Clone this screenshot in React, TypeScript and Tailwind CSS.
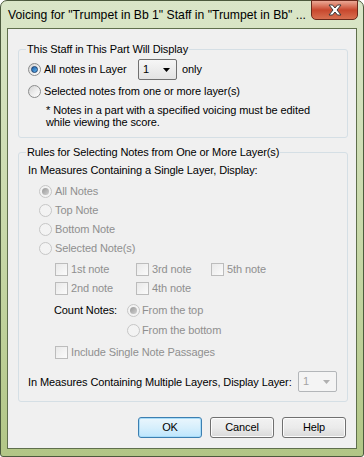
import React from "react";

const Radio = ({ checked, disabled }: { checked?: boolean; disabled?: boolean }) => (
  <span
    className={`flex h-[13px] w-[13px] shrink-0 items-center justify-center rounded-full border ${
      disabled
        ? "border-[#c6c6c6] bg-[#f3f3f3]"
        : "border-[#8b8c8c] bg-gradient-to-br from-[#d2d2d2] via-[#ececec] to-[#ffffff]"
    }`}
  >
    {checked && (
      <span
        className={`h-[7px] w-[7px] rounded-full ${
          disabled
            ? "bg-gradient-to-br from-[#9a9a9a] to-[#d0d0d0]"
            : "border border-[#1b3f6e] bg-gradient-to-br from-[#1d5fa8] to-[#62b6ef]"
        }`}
      />
    )}
  </span>
);

const Check = () => (
  <span className="h-[13px] w-[13px] shrink-0 border border-[#bcbcbc] bg-gradient-to-br from-[#e9e9e9] to-[#fbfbfb]" />
);

const Arrow = ({ color }: { color: string }) => (
  <svg width="7" height="4" viewBox="0 0 7 4">
    <path d="M0 0h7L3.5 4z" fill={color} />
  </svg>
);

const Combo = ({ disabled }: { disabled?: boolean }) => (
  <div
    className={`flex h-[21px] w-[39px] shrink-0 items-center justify-between rounded-[2px] border pl-[4px] pr-[6px] ${
      disabled
        ? "border-[#b3b6b9] bg-[#f4f4f4] text-[#a3a3a3]"
        : "border-[#707070] bg-gradient-to-b from-[#f6f6f6] to-[#e3e3e3] text-black"
    }`}
  >
    <span>1</span>
    <Arrow color={disabled ? "#b0b0b0" : "#000000"} />
  </div>
);

const Btn = ({ label, primary }: { label: string; primary?: boolean }) => (
  <button
    className={`h-[21px] w-[64px] rounded-[3px] border text-black ${
      primary
        ? "border-[#3c7fb1] bg-gradient-to-b from-[#eaf6fd] via-[#d7effc] to-[#bde6fd] shadow-[inset_0_0_0_1px_#a8dcf8]"
        : "border-[#707070] bg-gradient-to-b from-[#f2f2f2] via-[#ebebeb] to-[#d9d9d9] shadow-[inset_0_0_0_1px_#fcfcfc]"
    }`}
  >
    {label}
  </button>
);

const App: React.FC = () => {
  const dis = "text-[#8f8f8f]";
  return (
    <div className="h-[457px] w-[364px] bg-white font-['Liberation_Sans',Arial,sans-serif] text-[11px]">
      <div className="flex h-[457px] w-[364px] flex-col rounded-t-[7px] rounded-b-[3px] border border-[#4c5a3d] bg-gradient-to-b from-[#dae6c8] via-[#c9d9aa] to-[#b2c686]">
        {/* title bar */}
        <div className="flex h-[27px] items-start">
          <span className="ml-[7px] mt-[6px] text-[12.2px] leading-[16px] text-black">
            Voicing for "Trumpet in Bb 1" Staff in "Trumpet in Bb" ...
          </span>
          <div className="ml-auto mr-[5px] -mt-[1px] flex h-[20px] w-[47px] items-center justify-center rounded-b-[5px] border border-[#6b2a1c] bg-gradient-to-b from-[#eaa895] via-[#c8472d] to-[#d86f50]">
            <svg width="14" height="12" viewBox="0 0 14 12">
              <path
                d="M1 1h3.5L7 4l2.5-3H13L9 6l4 5H9.5L7 8l-2.5 3H1l4-5z"
                fill="#ffffff"
                stroke="#3b3b3b"
                strokeWidth="1"
                strokeLinejoin="round"
              />
            </svg>
          </div>
        </div>

        {/* client area */}
        <div className="ml-[6px] flex h-[421px] w-[350px] flex-col border border-[#5f6f4c] bg-[#f0f0f0] tracking-[-0.1px] text-black">
          <fieldset className="ml-[10px] mt-[13px] w-[330px] rounded-[3px] border border-[#d5dfe5] pb-[9px] pl-[9px] pr-[10px]">
            <legend className="-ml-[2px] px-[1px] leading-[14px]">This Staff in This Part Will Display</legend>
            <div className="mt-[3px] flex h-[21px] items-center">
              <Radio checked />
              <span className="ml-[3px] w-[94px]">All notes in Layer</span>
              <Combo />
              <span className="ml-[5px]">only</span>
            </div>
            <div className="mt-[3px] flex h-[16px] items-center">
              <Radio />
              <span className="ml-[3px]">Selected notes from one or more layer(s)</span>
            </div>
            <div className="mt-[5px] pl-[18px] leading-[12px]">
              <div>* Notes in a part with a specified voicing must be edited</div>
              <div>while viewing the score.</div>
            </div>
          </fieldset>

          <fieldset className="ml-[10px] mt-[7px] w-[330px] rounded-[3px] border border-[#d5dfe5] pb-[9px] pl-[9px] pr-[10px]">
            <legend className="-ml-[2px] px-[1px] leading-[14px]">
              Rules for Selecting Notes from One or More Layer(s)
            </legend>
            <div className="mt-[4px] leading-[14px]">In Measures Containing a Single Layer, Display:</div>
            <div className="mt-[5px]">
              {["All Notes", "Top Note", "Bottom Note", "Selected Note(s)"].map((t, i) => (
                <div key={t} className="flex h-[19px] items-center pl-[11px]">
                  <Radio checked={i === 0} disabled />
                  <span className={`ml-[3px] ${dis}`}>{t}</span>
                </div>
              ))}
            </div>
            <div className="mt-[2px]">
              {[
                ["1st note", "3rd note", "5th note"],
                ["2nd note", "4th note", ""],
              ].map((row) => (
                <div key={row[0]} className="flex h-[19px] items-center pl-[27px]">
                  {row.map((t, j) =>
                    t ? (
                      <div
                        key={t}
                        className={`flex items-center ${j === 0 ? "w-[81px]" : j === 1 ? "w-[75px]" : ""}`}
                      >
                        <Check />
                        <span className={`ml-[3px] ${dis}`}>{t}</span>
                      </div>
                    ) : null
                  )}
                </div>
              ))}
            </div>
            <div className="mt-[3px] flex h-[19px] items-center pl-[26px]">
              <span className="w-[73px]">Count Notes:</span>
              <Radio checked disabled />
              <span className={`ml-[2px] ${dis}`}>From the top</span>
            </div>
            <div className="mt-[1px] flex h-[19px] items-center pl-[99px]">
              <Radio disabled />
              <span className={`ml-[2px] ${dis}`}>From the bottom</span>
            </div>
            <div className="mt-[3px] flex h-[19px] items-center pl-[27px]">
              <Check />
              <span className={`ml-[3px] ${dis}`}>Include Single Note Passages</span>
            </div>
            <div className="mt-[9px] flex h-[21px] items-center">
              <span className="pt-[2px]">In Measures Containing Multiple Layers, Display Layer:</span>
              <div className="ml-auto">
                <Combo disabled />
              </div>
            </div>
          </fieldset>

          <div className="mt-[15px] flex justify-end gap-[8px] pr-[10px]">
            <Btn label="OK" primary />
            <Btn label="Cancel" />
            <Btn label="Help" />
          </div>
        </div>
      </div>
    </div>
  );
};

export default App;
